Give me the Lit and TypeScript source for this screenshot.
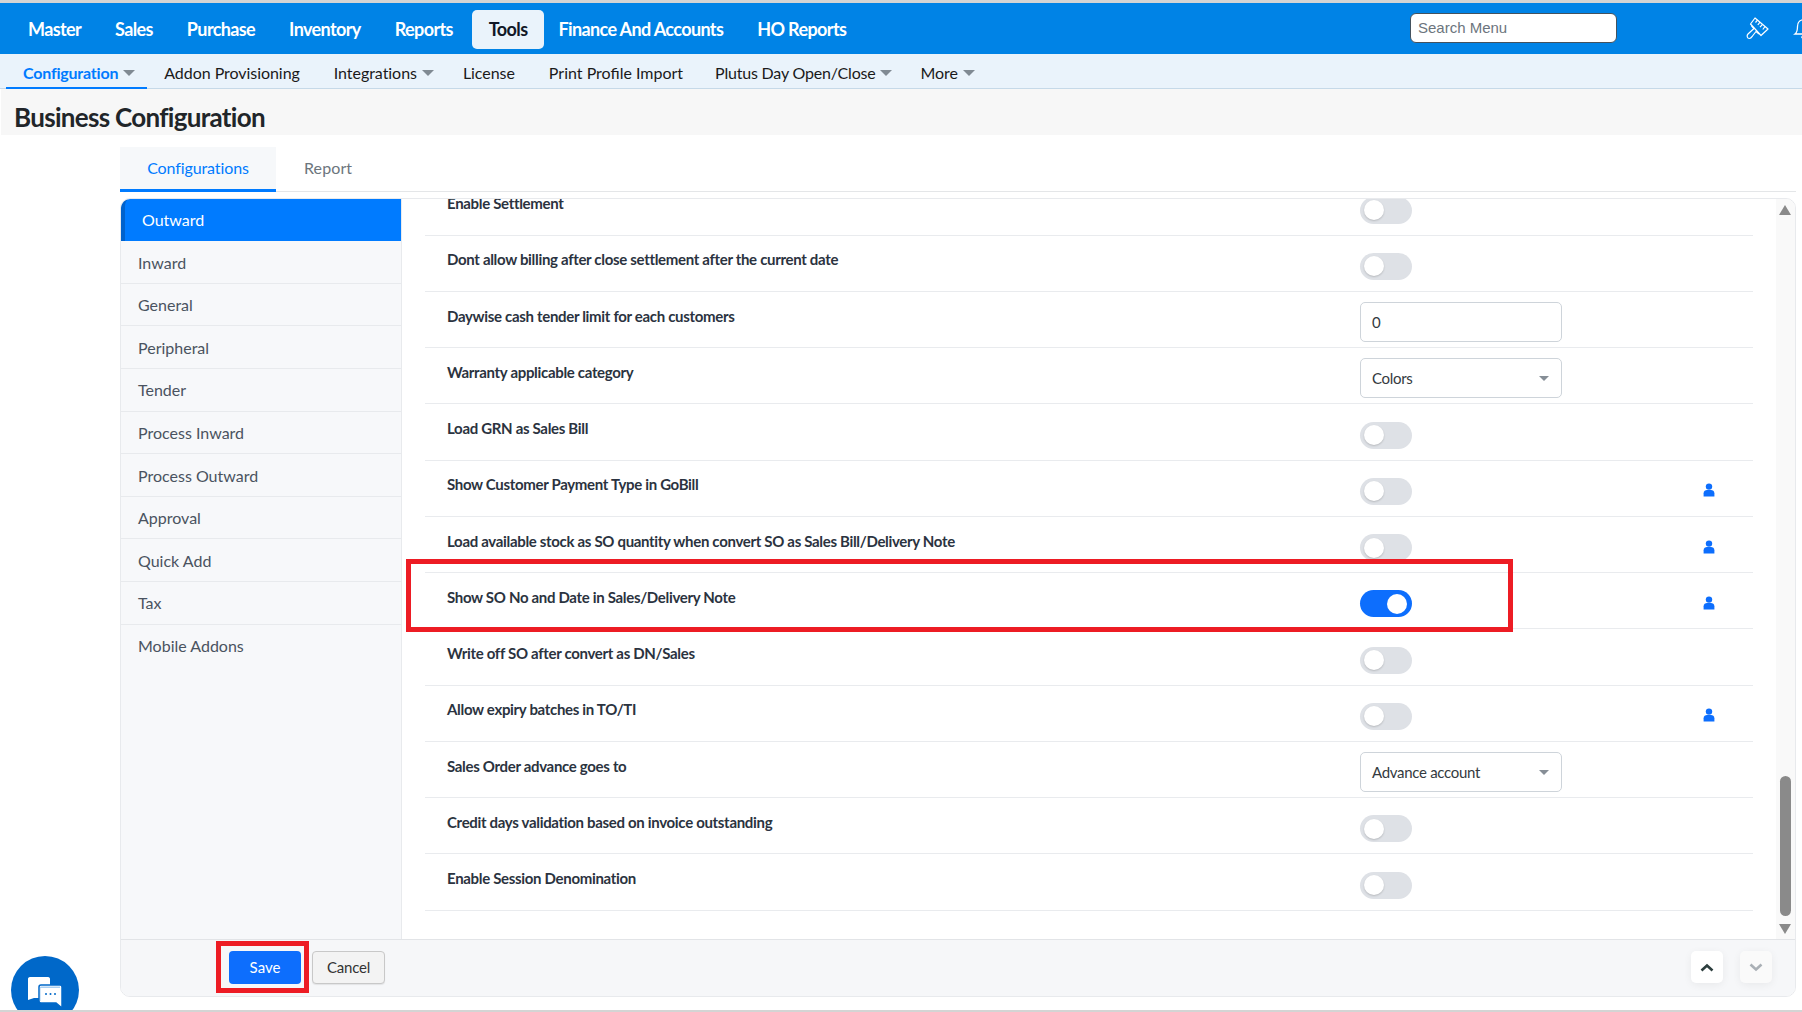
import { LitElement, html, css, svg } from "lit";
import { customElement } from "lit/decorators.js";

type Row = { label: string; kind: "off" | "on" | "input" | "select"; value?: string; person?: boolean };

const ROWS: Row[] = [
  { label: "Enable Settlement", kind: "off" },
  { label: "Dont allow billing after close settlement after the current date", kind: "off" },
  { label: "Daywise cash tender limit for each customers", kind: "input", value: "0" },
  { label: "Warranty applicable category", kind: "select", value: "Colors" },
  { label: "Load GRN as Sales Bill", kind: "off" },
  { label: "Show Customer Payment Type in GoBill", kind: "off", person: true },
  { label: "Load available stock as SO quantity when convert SO as Sales Bill/Delivery Note", kind: "off", person: true },
  { label: "Show SO No and Date in Sales/Delivery Note", kind: "on", person: true },
  { label: "Write off SO after convert as DN/Sales", kind: "off" },
  { label: "Allow expiry batches in TO/TI", kind: "off", person: true },
  { label: "Sales Order advance goes to", kind: "select", value: "Advance account" },
  { label: "Credit days validation based on invoice outstanding", kind: "off" },
  { label: "Enable Session Denomination", kind: "off" },
];

const NAV = ["Master", "Sales", "Purchase", "Inventory", "Reports", "Tools", "Finance And Accounts", "HO Reports"];
const SUB: [string, boolean][] = [
  ["Configuration", true],
  ["Addon Provisioning", false],
  ["Integrations", true],
  ["License", false],
  ["Print Profile Import", false],
  ["Plutus Day Open/Close", true],
  ["More", true],
];
const SIDE = ["Inward", "General", "Peripheral", "Tender", "Process Inward", "Process Outward", "Approval", "Quick Add", "Tax", "Mobile Addons"];

const person = svg`<svg width="12" height="14" viewBox="0 0 12 14"><circle cx="6" cy="3.6" r="3.2" fill="#0d6efd"/><path d="M0.6 13.6V10.2C0.6 8 2.4 7 4 7H8C9.6 7 11.4 8 11.4 10.2V13.6Z" fill="#0d6efd"/></svg>`;

@customElement("app-root")
export class AppRoot extends LitElement {
  static styles = css`
    :host { display: block; width: 1802px; height: 1012px; overflow: hidden; position: relative; background: #fff; font-family: Lato, "Open Sans", sans-serif; color: #212529; }
    .topline { height: 3px; background: #d4d4d4; }
    .nav { height: 51px; background: #0083e6; display: flex; align-items: center; padding-left: 11px; position: relative; }
    .nav a { height: 39px; display: flex; align-items: center; padding: 0 17px; color: #fff; font-size: 18px; font-weight: 700; letter-spacing: -0.62px; border-radius: 5px; margin-top: 1px; }
    .nav a.active { background: #eaf3fb; color: #111827; margin-left: 2px; margin-right: -3px; }
    .search { position: absolute; left: 1410px; top: 10px; width: 207px; height: 30px; box-sizing: border-box; border: 1px solid #44525e; border-radius: 6px; background: #fff; padding: 0 0 2px 7px; display: flex; align-items: center; font-family: "Liberation Sans", sans-serif; font-size: 15px; color: #6c757d; }
    .ico { position: absolute; top: 14px; }
    .sub { height: 35px; box-sizing: border-box; background: #eaf3fb; border-bottom: 1px solid #c6d9e8; display: flex; padding-left: 6px; }
    .sub a { display: flex; align-items: center; padding: 1px 17px 0; font-size: 16px; color: #1a1a1a; letter-spacing: -0.05px; height: 35px; box-sizing: border-box; white-space: nowrap; }
    .sub a.caret { padding-right: 12px; }
    .sub a:nth-child(5) { letter-spacing: 0; padding-right: 15px; }
    .sub a:nth-child(6) { letter-spacing: -0.2px; padding-right: 11px; }
    .sub a.active { color: #007bff; border-bottom: 2px solid #007bff; letter-spacing: -0.2px; font-weight: 700; padding-top: 3px; }
    .sub i { display: inline-block; width: 0; height: 0; border-left: 6px solid transparent; border-right: 6px solid transparent; border-top: 6px solid #808a93; margin-left: 5px; margin-top: 2px; }
    .title { height: 46px; box-sizing: border-box; background: #f7f7f7; margin-left: 1px; padding: 9px 0 0 13px; display: flex; align-items: center; font-size: 26px; font-weight: 700; letter-spacing: -0.7px; color: #212529; }
    .tabs { margin: 12px 6px 0 120px; height: 45px; box-sizing: border-box; border-bottom: 1px solid #e4e6e8; display: flex; }
    .tab { height: 45px; box-sizing: border-box; width: 156px; display: flex; align-items: center; justify-content: center; background: #f6f8fa; color: #007bff; font-size: 16px; letter-spacing: -0.1px; border-bottom: 3px solid #007bff; padding-bottom: 2px; }
    .tab.plain { background: none; border: 0; color: #6c757d; width: auto; margin-left: 28px; padding-bottom: 5px; letter-spacing: 0.1px; }
    .panel { margin: 6px 6px 0 120px; height: 799px; box-sizing: border-box; border: 1px solid #e8eaed; border-radius: 10px; display: grid; grid-template-rows: 1fr 57px; grid-template-columns: 281px 1fr; overflow: hidden; }
    .side { background: #f7f8fa; border-right: 1px solid #e8eaed; overflow: hidden; }
    .side .on { height: 42.3px; box-sizing: border-box; background: #007bff; border-left: 4px solid #0062cc; padding: 0 0 2px 17px; display: flex; align-items: center; color: #fff; font-size: 16px; border-radius: 8px 0 0 0; }
    .side .it { height: 42.6px; box-sizing: border-box; padding-left: 17px; display: flex; align-items: center; font-size: 16px; color: #4a5360; border-bottom: 1px solid #e8eaed; }
    .side .it:last-child { border-bottom: 0; }
    .main { position: relative; overflow: hidden; }
    .list { margin: -19.6px 0 0 23px; width: 1328px; }
    .row { height: 56.25px; box-sizing: border-box; border-bottom: 1px solid #e9ebee; display: grid; grid-template-columns: 935px 343px 1fr; align-items: center; }
    .label { padding: 0 0 7.6px 22px; font-size: 15px; font-weight: 700; letter-spacing: -0.32px; color: #2b3340; white-space: nowrap; }
    .ctl { display: flex; align-items: center; }
    .tg { width: 52px; height: 27px; border-radius: 14px; background: #dee1e6; position: relative; margin-top: 6px; }
    .tg::after { content: ""; position: absolute; left: 4px; top: 3.5px; width: 20px; height: 20px; border-radius: 50%; background: #fff; box-shadow: 0 1px 2px rgba(0,0,0,.18); }
    .tg.on { background: #0d6efd; }
    .tg.on::after { left: 27px; box-shadow: none; }
    .box { width: 202px; height: 40px; box-sizing: border-box; border: 1px solid #ced4da; border-radius: 5px; background: #fff; display: flex; align-items: center; justify-content: space-between; padding: 0 12px 0 11px; font-size: 15px; color: #343a40; letter-spacing: -0.3px; margin-top: 4px; }
    .box i { width: 0; height: 0; border-left: 5px solid transparent; border-right: 5px solid transparent; border-top: 5px solid #868e96; margin-top: 1px; }
    .p { display: flex; padding-top: 4px; }
    .bar { position: absolute; right: 0; top: 0; bottom: 0; width: 19px; background: #f9f9f9; }
    .arr { position: absolute; left: 3px; width: 0; height: 0; border-left: 6.5px solid transparent; border-right: 6.5px solid transparent; }
    .arr.up { top: 6px; border-bottom: 10px solid #8a8a8a; }
    .arr.dn { bottom: 5px; border-top: 10px solid #8a8a8a; }
    .thumb { position: absolute; left: 4px; top: 577px; width: 11px; height: 140px; border-radius: 6px; background: #8a8a8a; }
    .foot { grid-column: 1 / 3; background: #f6f7f9; border-top: 1px solid #e2e4e7; display: flex; align-items: center; padding: 0 0 1px 108px; position: relative; }
    .btn { width: 72px; height: 33px; box-sizing: border-box; border-radius: 4px; display: flex; align-items: center; justify-content: center; font-size: 15px; padding-bottom: 1px; }
    .save { background: #0d6efd; color: #fff; }
    .cancel { background: #f3f3f3; border: 1px solid #c8c8c8; color: #333; margin-left: 11px; width: 73px; box-shadow: 0 1px 1px rgba(0,0,0,.08); letter-spacing: -0.2px; }
    .pg { position: absolute; top: 11px; width: 32px; height: 32px; border-radius: 5px; background: #fff; display: flex; align-items: center; justify-content: center; box-shadow: 0 2px 8px rgba(0,0,0,.06); }
    .pg.b { background: #fafafa; }
    .red { position: absolute; border: 5px solid #ed1c24; box-sizing: border-box; pointer-events: none; }
    .red.a { left: 406px; top: 559px; width: 1107px; height: 73px; }
    .red.b { left: 216px; top: 941px; width: 93px; height: 52px; }
    .chat { position: absolute; left: 11px; top: 956px; width: 68px; height: 68px; border-radius: 50%; background: #0068c9; }
    .baseline { position: absolute; left: 0; right: 0; top: 1010px; height: 2px; background: #d4d4d4; }
  `;

  private control(r: Row) {
    if (r.kind === "off") return html`<div class="tg"></div>`;
    if (r.kind === "on") return html`<div class="tg on"></div>`;
    if (r.kind === "input") return html`<div class="box">${r.value}</div>`;
    return html`<div class="box">${r.value}<i></i></div>`;
  }

  render() {
    return html`
      <div class="topline"></div>
      <div class="nav">
        ${NAV.map((n) => html`<a class=${n === "Tools" ? "active" : ""}>${n}</a>`)}
        <div class="search">Search Menu</div>
        <svg class="ico" style="left:1746px" width="23" height="23" viewBox="0 0 23 23" fill="none" stroke="#fff" stroke-width="1.2" stroke-linejoin="round">
          <path d="M9 1L22 12L15 18.500L4.500 7Z"/>
          <path d="M11.500 3.200L9.500 5.500M14 5.200L11.800 8M16.500 7.300L14 10.200M19 9.500L16.800 12.500"/>
          <path d="M5.500 9L8 11.500L2 17C0.500 18.500 1 21.500 3.500 21.500C5 21.500 5.500 20.500 6.500 19L10 14.500L13 17"/>
        </svg>
        <svg class="ico" style="left:1793px" width="24" height="23" viewBox="0 0 24 23" fill="none" stroke="#fff" stroke-width="1.3">
          <path d="M2 17C4 15.500 4.500 13 4.500 9.500C4.500 5 7.500 2.500 11.500 2.500C15.500 2.500 18.500 5 18.500 9.500C18.500 13 19 15.500 21 17Z"/><path d="M8.500 19.500C9 21 10 21.800 11.500 21.800"/>
        </svg>
      </div>
      <div class="sub">
        ${SUB.map(([s, c], i) => html`<a class="${i === 0 ? "active" : ""} ${c ? "caret" : ""}">${s}${c ? html`<i></i>` : ""}</a>`)}
      </div>
      <div class="title">Business Configuration</div>
      <div class="tabs"><div class="tab">Configurations</div><div class="tab plain">Report</div></div>
      <div class="panel">
        <div class="side">
          <div class="on">Outward</div>
          ${SIDE.map((s) => html`<div class="it">${s}</div>`)}
        </div>
        <div class="main">
          <div class="list">
            ${ROWS.map(
              (r) => html`<div class="row">
                <div class="label">${r.label}</div>
                <div class="ctl">${this.control(r)}</div>
                <div class="p">${r.person ? person : ""}</div>
              </div>`
            )}
          </div>
          <div class="bar"><div class="arr up"></div><div class="thumb"></div><div class="arr dn"></div></div>
        </div>
        <div class="foot">
          <div class="btn save">Save</div>
          <div class="btn cancel">Cancel</div>
          <div class="pg" style="left:1570px">
            <svg width="14" height="9" viewBox="0 0 14 9" fill="none" stroke="#2c3e3e" stroke-width="2.6"><path d="M1.500 7.500L7 2.500L12.500 7.500"/></svg>
          </div>
          <div class="pg b" style="left:1619px">
            <svg width="14" height="9" viewBox="0 0 14 9" fill="none" stroke="#aab0b6" stroke-width="2.6"><path d="M1.500 1.500L7 6.500L12.500 1.500"/></svg>
          </div>
        </div>
      </div>
      <div class="chat">
        <svg width="68" height="68" viewBox="0 0 68 68" style="display:block">
          <path d="M19 21H37C38.500 21 39 22 39 23V40C39 41 38.500 42 37 42H23L17 44V23C17 22 17.500 21 19 21Z" fill="#fff"/>
          <path d="M30 29H49C50.500 29 51 30 51 31V52L45 47H30C28.500 47 28 46 28 45V31C28 30 28.500 29 30 29Z" fill="#fff" stroke="#0068c9" stroke-width="1.500"/>
          <path d="M30 30.500H49V32H29.500V45H29V31Z" fill="#a9cff2"/>
          <circle cx="35" cy="38" r="1" fill="#0068c9"/><circle cx="39.500" cy="38" r="1" fill="#0068c9"/><circle cx="44" cy="38" r="1" fill="#0068c9"/>
        </svg>
      </div>
      <div class="baseline"></div>
      <div class="red a"></div>
      <div class="red b"></div>
    `;
  }
}
